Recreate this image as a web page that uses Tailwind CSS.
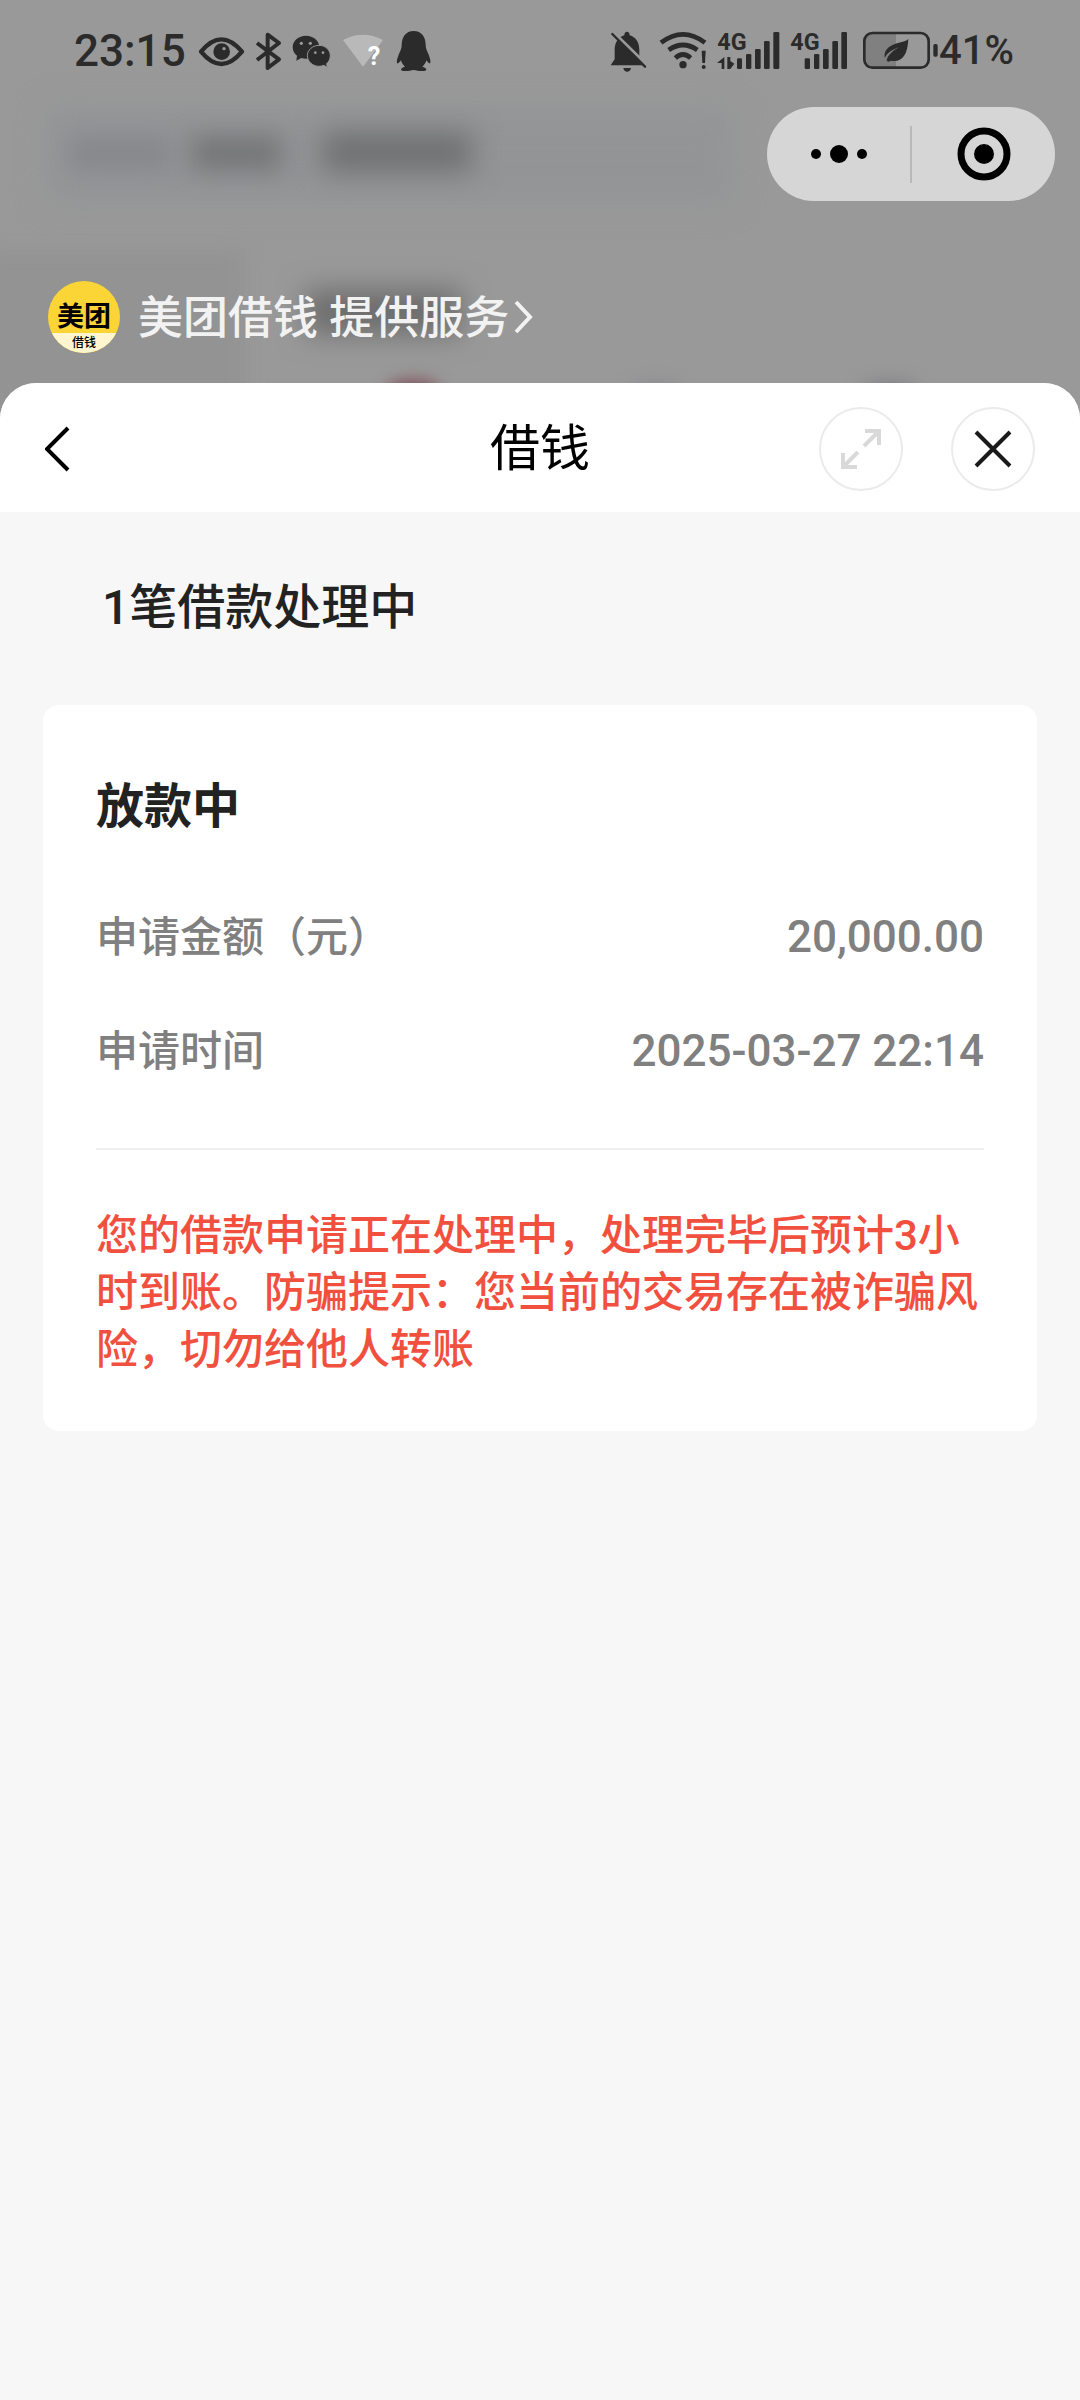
<!DOCTYPE html>
<html lang="zh-CN">
<head>
    <meta charset="UTF-8" />
    <meta name="viewport" content="width=device-width, initial-scale=1.0" />
    <title>借钱</title>
    <script src="https://cdn.jsdelivr.net/npm/@tailwindcss/browser@4"></script>
</head>
<body class="bg-[#999999] font-['Roboto','Noto_Sans_CJK_SC',sans-serif] text-[#222222]">
<div class="relative flex min-h-screen flex-col overflow-hidden">

    <!-- Dimmed page behind the sheet -->
    <div class="absolute inset-x-0 top-0 h-[420px] overflow-hidden" aria-hidden="true">
        <div class="absolute left-[50px] top-[110px] h-[90px] w-[680px] bg-[#929496] blur-[16px]"></div>
        <div class="absolute left-[70px] top-[138px] h-[30px] w-[100px] bg-[#85878a] blur-[12px]"></div>
        <div class="absolute left-[192px] top-[136px] h-[34px] w-[90px] bg-[#737576] blur-[13px]"></div>
        <div class="absolute left-[322px] top-[132px] h-[40px] w-[150px] bg-[#6f7171] blur-[14px]"></div>
        <div class="absolute left-[-20px] top-[250px] h-[180px] w-[265px] bg-[#939393] blur-[10px]"></div>
        <div class="absolute left-[306px] top-[290px] h-[44px] w-[155px] bg-[#6c6c6c] blur-[14px]"></div>
        <div class="absolute left-[384px] top-[380px] h-[40px] w-[58px] rounded-full bg-[#80505a] blur-[8px]"></div>
        <div class="absolute left-[625px] top-[386px] h-[40px] w-[60px] rounded-full bg-[#84848f] blur-[9px]"></div>
        <div class="absolute left-[860px] top-[384px] h-[40px] w-[60px] rounded-full bg-[#77747c] blur-[9px]"></div>
    </div>

    <!-- Status bar -->
    <div class="relative flex h-[102px] items-center justify-between pl-[74px] pr-[66px] text-[#2b2b2b]">
        <div class="flex items-center gap-[10px]">
            <span class="w-[114px] text-[44px] leading-none font-medium">23:15</span>
            <svg class="h-[42px] w-[47px]" viewBox="414 45 141 126" fill="none">
                <path d="M423 110Q484 36 546 110Q484 184 423 110Z" stroke="currentColor" stroke-width="13" stroke-linejoin="round" />
                <circle cx="485" cy="110" r="25" fill="currentColor" />
                <circle cx="492" cy="101" r="5" fill="#999999" />
            </svg>
            <svg class="h-[42px] w-[27px]" viewBox="585 45 81 126" fill="none">
                <path d="M591 84L657 133L623 159V59L657 84L591 135" stroke="currentColor" stroke-width="12" stroke-linejoin="round" />
            </svg>
            <svg class="h-[42px] w-[39px]" viewBox="696 45 117 126">
                <path d="M738 62c-22 0-40 15-40 34 0 11 5 20 13 26l-2 15 15-8c30 8 54-10 54-33 0-19-18-34-40-34z" fill="currentColor" />
                <path d="M777 91c-19 0-35 14-35 31s16 32 35 32c5 0 10-1 14-3l11 6-2-11c7-6 11-14 11-24 0-17-15-31-34-31z" fill="currentColor" stroke="#999999" stroke-width="3" />
                <g fill="#999999">
                    <circle cx="724" cy="85" r="5" /><circle cx="751" cy="85" r="5" />
                    <circle cx="766" cy="113" r="4" /><circle cx="789" cy="113" r="4" />
                </g>
            </svg>
            <svg class="h-[42px] w-[43px] overflow-visible" viewBox="843 45 129 126">
                <path d="M849 75Q909 43 969 75L909 155Z" fill="#b9b9b9" />
                <text x="923" y="150" class="fill-white text-[76px] font-bold">?</text>
            </svg>
            <svg class="h-[42px] w-[37px]" viewBox="1002 45 111 126" fill="currentColor">
                <path d="M1061 48c-24 0-36 19-36 42 0 10-4 18-9 29-5 12-7 24-4 26 3 1 8-4 11-9 2 8 6 14 12 19-7 2-12 5-12 9 0 6 26 4 38 1 12 3 38 5 38-1 0-4-5-7-12-9 6-5 10-11 12-19 3 5 8 10 11 9 3-2 1-14-4-26-5-11-9-19-9-29 0-23-12-42-36-42z" />
            </svg>
        </div>

        <div class="flex items-center gap-[10px]">
            <svg class="h-[42px] w-[39px]" viewBox="60 45 117 126">
                <path d="M62 151l12-18V104c0-22 12-38 29-43 0-7 3-11 8-11s8 4 8 11c18 5 29 21 29 43v29l12 18z" fill="currentColor" />
                <path d="M100 159h23c-2 15-21 15-23 0z" fill="currentColor" />
                <path d="M70 51L172 151" stroke="#999999" stroke-width="9" />
                <path d="M145 127l15 24h12z" fill="#999999" />
                <path d="M67 57L165 155" stroke="currentColor" stroke-width="7" stroke-linecap="round" />
            </svg>
            <svg class="h-[42px] w-[48px]" viewBox="207 45 144 126" fill="none" stroke="currentColor" stroke-width="14">
                <path d="M213 83Q279 33 345 83M236 105Q279 75 322 105M256 129Q279 108 302 129" />
                <circle cx="279" cy="149" r="11" fill="currentColor" stroke="none" />
                <path d="M335 107h12l-2 37h-8z" fill="currentColor" stroke="none" />
                <circle cx="341" cy="156" r="6" fill="currentColor" stroke="none" />
            </svg>
            <svg class="h-[42px] w-[63px] overflow-visible" viewBox="381 45 189 126" fill="currentColor">
                <text x="382" y="104" class="text-[70px] font-bold">4G</text>
                <path d="M403 126v36h-8v-18h-14zM412 126h9v12l12 8-12 16h-9z" />
                <rect x="441" y="130" width="15" height="32" rx="4" />
                <rect x="468" y="117" width="16" height="45" rx="4" />
                <rect x="495" y="102" width="17" height="60" rx="4" />
                <rect x="522" y="78" width="17" height="84" rx="4" />
                <rect x="550" y="51" width="18" height="111" rx="4" />
            </svg>
            <svg class="h-[42px] w-[58px] overflow-visible" viewBox="600 45 174 126" fill="currentColor">
                <text x="601" y="104" class="text-[70px] font-bold">4G</text>
                <rect x="644" y="130" width="16" height="32" rx="4" />
                <rect x="672" y="117" width="16" height="45" rx="4" />
                <rect x="699" y="102" width="17" height="60" rx="4" />
                <rect x="727" y="78" width="17" height="84" rx="4" />
                <rect x="754" y="51" width="17" height="111" rx="4" />
            </svg>
            <div class="flex items-center">
                <svg class="h-[42px] w-[81px]" viewBox="804 45 243 126" fill="none">
                    <path d="M918 54H848q-25 0-25 25v54q0 25 25 25h70z" fill="#808080" />
                    <rect x="823" y="54" width="193" height="104" rx="24" stroke="currentColor" stroke-width="8" />
                    <rect x="1030" y="87" width="13" height="38" rx="5" fill="currentColor" />
                    <path d="M955 71c-6 8-20 9-38 15-22 7-36 20-33 42 8-14 22-24 42-31-20 12-34 26-36 40l5 3c3-1 5-2 8-3 34 6 50-18 52-66z" fill="currentColor" />
                </svg>
                <span class="text-[40px] leading-none font-medium">41%</span>
            </div>
        </div>
    </div>

    <!-- Mini program capsule -->
    <div class="relative flex justify-end pt-[5px] pr-[25px]">
        <div class="flex h-[94px] w-[288px] items-center rounded-full bg-[#d6d6d6] text-black">
            <button type="button" aria-label="更多" class="flex h-full flex-1 items-center justify-center">
                <svg class="h-5 w-[58px]" viewBox="0 0 58 20" fill="currentColor">
                    <circle cx="6" cy="10" r="5" />
                    <circle cx="29" cy="10" r="9" />
                    <circle cx="52" cy="10" r="5" />
                </svg>
            </button>
            <div class="h-[57px] w-[2px] bg-[#b9b9b9]"></div>
            <button type="button" aria-label="关闭小程序" class="flex h-full flex-1 items-center justify-center">
                <svg class="h-[54px] w-[54px]" viewBox="0 0 54 54" fill="none">
                    <circle cx="27" cy="27" r="23" stroke="currentColor" stroke-width="7" />
                    <circle cx="27" cy="27" r="10" fill="currentColor" />
                </svg>
            </button>
        </div>
    </div>

    <!-- Service provider -->
    <a href="#" class="relative mt-20 mb-[30px] flex h-[72px] items-center self-start pl-12 text-[#f2f2f2]">
        <span class="flex h-[72px] w-[72px] flex-col items-center overflow-hidden rounded-full bg-[#fbd536] text-black">
            <span class="flex h-[52px] items-end text-[27px] leading-[32px] font-bold">美团</span>
            <span class="h-5 w-full bg-[#fff6d0] text-center text-[12px] leading-[20px] font-medium">借钱</span>
        </span>
        <span class="ml-[18px] pt-1 text-[45px] leading-[72px] font-medium">美团借钱 提供服务</span>
        <svg class="ml-1 h-9 w-5" viewBox="0 0 20 36" fill="none">
            <path d="M3 3L17 18L3 33" stroke="currentColor" stroke-width="4" />
        </svg>
    </a>

    <!-- Sheet -->
    <main class="relative flex flex-1 flex-col overflow-hidden rounded-t-[36px] bg-[#f7f7f7]">
        <header class="grid h-[129px] grid-cols-3 items-center bg-white px-[45px] pt-[2px] text-black">
            <button type="button" aria-label="返回" class="justify-self-start">
                <svg class="h-[46px] w-7" viewBox="0 0 28 46" fill="none">
                    <path d="M23 2L2 23L23 44" stroke="currentColor" stroke-width="4" />
                </svg>
            </button>
            <h1 class="text-center text-[50px] leading-[72px]">借钱</h1>
            <div class="flex gap-12 justify-self-end">
                <button type="button" aria-label="全屏" class="flex h-[84px] w-[84px] items-center justify-center rounded-full border-2 border-[#ebebeb] text-[#d9d9d9]">
                    <svg class="h-11 w-11" viewBox="0 0 44 44" fill="none" stroke="currentColor" stroke-width="4">
                        <path d="M26 4H40V18M40 4L25 19M4 26V40H18M4 40L19 25" />
                    </svg>
                </button>
                <button type="button" aria-label="关闭" class="flex h-[84px] w-[84px] items-center justify-center rounded-full border-2 border-[#ebebeb] text-[#1a1a1a]">
                    <svg class="h-10 w-10" viewBox="0 0 40 40" fill="none" stroke="currentColor" stroke-width="4">
                        <path d="M3 3L37 37M37 3L3 37" />
                    </svg>
                </button>
            </div>
        </header>

        <h2 class="mt-[60px] px-[102px] text-[48px] leading-[72px] font-medium">1笔借款处理中</h2>

        <section class="mx-[43px] mt-[61px] rounded-2xl bg-white px-[53px] pt-[66px] pb-[53px]">
            <h3 class="text-[48px] leading-[72px] font-bold">放款中</h3>
            <dl class="mt-[66px] border-b-2 border-[#f0f0f0] pb-[68px] leading-[57px] font-medium text-[#808080]">
                <div class="flex items-center justify-between">
                    <dt class="text-[42px]">申请金额（元）</dt>
                    <dd class="text-[44px]">20,000.00</dd>
                </div>
                <div class="mt-[57px] flex items-center justify-between">
                    <dt class="text-[42px]">申请时间</dt>
                    <dd class="text-[44px]">2025-03-27 22:14</dd>
                </div>
            </dl>
            <p class="mt-[57px] text-[42px] leading-[57px] font-medium text-[#f2503f]">您的借款申请正在处理中，处理完毕后预计3小时到账。防骗提示：您当前的交易存在被诈骗风险，切勿给他人转账</p>
        </section>
    </main>
</div>
</body>
</html>
